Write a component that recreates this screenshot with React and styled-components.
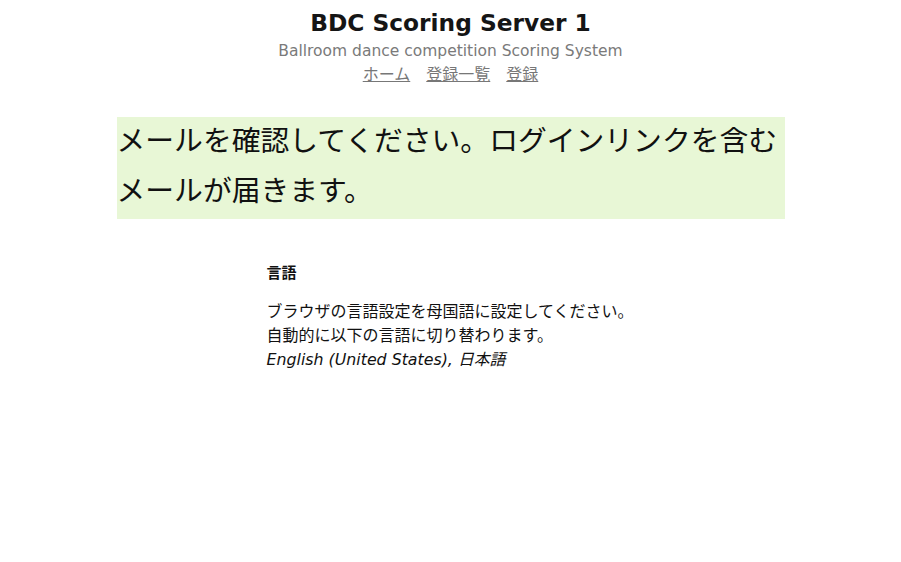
import React from "react";
import styled, { createGlobalStyle } from "styled-components";

const Global = createGlobalStyle`
  html, body { margin: 0; padding: 0; background: #fff; }
  body {
    font-family: "DejaVu Sans", "Noto Sans CJK JP", sans-serif;
    color: #111;
  }
`;

const Page = styled.div`
  display: flex;
  flex-direction: column;
  align-items: center;
`;

const Header = styled.header`
  display: flex;
  flex-direction: column;
  align-items: center;
  padding-top: 7px;
`;

const Title = styled.h1`
  margin: 0;
  font-size: 23.3px;
  line-height: 32px;
  font-weight: bold;
  color: #151515;
`;

const Subtitle = styled.div`
  font-size: 15.5px;
  line-height: 24px;
  color: #7a7a7a;
`;

const Nav = styled.nav`
  display: flex;
  gap: 16px;
  font-size: 16px;
  line-height: 24px;
`;

const NavLink = styled.a`
  color: #777;
  text-decoration: underline;
  cursor: pointer;
`;

const Notice = styled.div`
  width: 668px;
  margin-top: 30px;
  padding-bottom: 5px;
  background: #e8f7d6;
  font-family: "Noto Sans CJK JP", sans-serif;
  font-size: 28.8px;
  line-height: 50px;
  color: #111;
`;

const NoticeText = styled.p`
  margin: -3px 0 0;
`;

const Section = styled.section`
  width: 668px;
  box-sizing: border-box;
  padding-left: 150px;
  margin-top: 41px;
  font-family: "Noto Sans CJK JP", sans-serif;
`;

const SectionTitle = styled.h3`
  margin: 0 0 14px;
  font-size: 15px;
  line-height: 24px;
  font-weight: bold;
`;

const Text = styled.p`
  margin: 0;
  font-size: 16px;
  line-height: 24px;
  white-space: nowrap;
`;

const Langs = styled.em`
  font-style: italic;
  font-family: "DejaVu Sans", "Noto Sans CJK JP", sans-serif;
  font-size: 15.8px;
`;

export default function App() {
  return (
    <>
      <Global />
      <Page>
        <Header>
          <Title>BDC Scoring Server 1</Title>
          <Subtitle>Ballroom dance competition Scoring System</Subtitle>
          <Nav>
            <NavLink>ホーム</NavLink>
            <NavLink>登録一覧</NavLink>
            <NavLink>登録</NavLink>
          </Nav>
        </Header>
        <Notice>
          <NoticeText>
            メールを確認してください。ログインリンクを含むメールが届きます。
          </NoticeText>
        </Notice>
        <Section>
          <SectionTitle>言語</SectionTitle>
          <Text>
            ブラウザの言語設定を母国語に設定してください。
            <br />
            自動的に以下の言語に切り替わります。
            <br />
            <Langs>English (United States), 日本語</Langs>
          </Text>
        </Section>
      </Page>
    </>
  );
}
